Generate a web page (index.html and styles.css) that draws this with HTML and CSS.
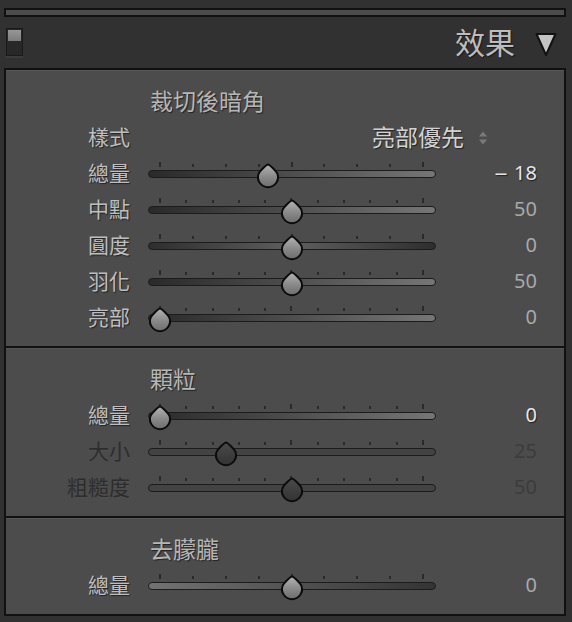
FILE: index.html
```html
<!DOCTYPE html>
<html lang="zh-Hant">
<head>
<meta charset="utf-8">
<title>效果</title>
<link rel="stylesheet" href="styles.css">
</head>
<body>
<svg class="defs" width="0" height="0" aria-hidden="true">
  <defs>
    <linearGradient id="thumbFill" x1="0" y1="0" x2="0" y2="1">
      <stop offset="0" stop-color="#b3b3b3"/>
      <stop offset="0.55" stop-color="#888888"/>
      <stop offset="1" stop-color="#6e6e6e"/>
    </linearGradient>
    <linearGradient id="thumbDim" x1="0" y1="0" x2="0" y2="1">
      <stop offset="0" stop-color="#4a4a4a"/>
      <stop offset="1" stop-color="#333333"/>
    </linearGradient>
    <path id="drop" d="M12 1.5 C13.5 1.5 20 8 21.3 10.5 A10 10 0 1 1 2.7 10.5 C4 8 10.5 1.5 12 1.5 Z"/>
  </defs>
</svg>

<div class="topbar"></div>

<div class="header">
  <div class="toggle"><span class="toggle-on"></span></div>
  <div class="title-group">
    <span class="title">效果</span>
    <svg class="collapse" width="24" height="25" viewBox="0 0 24 25"><polygon points="2.5,2 21.5,2 12,23"/></svg>
  </div>
</div>

<div class="panel">
  <section class="section">
    <div class="heading">裁切後暗角</div>
    <div class="row">
      <span class="label">樣式</span>
      <div class="dropdown">
        <span class="dropdown-text">亮部優先</span>
        <svg class="updown" width="10" height="16" viewBox="0 0 10 16"><polygon points="1,6.5 9,6.5 5,1.5"/><polygon points="1,9.5 9,9.5 5,14.5"/></svg>
      </div>
    </div>
    <div class="row">
      <span class="label">總量</span>
      <div class="slider" style="--v:0.41">
        <div class="ticks"><i class="tick tall"></i><i class="tick"></i><i class="tick"></i><i class="tick"></i><i class="tick tall"></i><i class="tick"></i><i class="tick"></i><i class="tick"></i><i class="tick tall"></i></div>
        <div class="track track-up"></div>
        <svg class="thumb" width="24" height="26" viewBox="0 0 24 26"><use href="#drop"/></svg>
      </div>
      <span class="value bright"><span class="minus">–</span> 18</span>
    </div>
    <div class="row">
      <span class="label">中點</span>
      <div class="slider" style="--v:0.5">
        <div class="ticks"><i class="tick tall"></i><i class="tick"></i><i class="tick"></i><i class="tick"></i><i class="tick"></i><i class="tick tall"></i><i class="tick"></i><i class="tick"></i><i class="tick"></i><i class="tick"></i><i class="tick tall"></i></div>
        <div class="track track-up"></div>
        <svg class="thumb" width="24" height="26" viewBox="0 0 24 26"><use href="#drop"/></svg>
      </div>
      <span class="value">50</span>
    </div>
    <div class="row">
      <span class="label">圓度</span>
      <div class="slider" style="--v:0.5">
        <div class="ticks"><i class="tick tall"></i><i class="tick"></i><i class="tick"></i><i class="tick"></i><i class="tick tall"></i><i class="tick"></i><i class="tick"></i><i class="tick"></i><i class="tick tall"></i></div>
        <div class="track track-mid"></div>
        <svg class="thumb" width="24" height="26" viewBox="0 0 24 26"><use href="#drop"/></svg>
      </div>
      <span class="value">0</span>
    </div>
    <div class="row">
      <span class="label">羽化</span>
      <div class="slider" style="--v:0.5">
        <div class="ticks"><i class="tick tall"></i><i class="tick"></i><i class="tick"></i><i class="tick"></i><i class="tick"></i><i class="tick tall"></i><i class="tick"></i><i class="tick"></i><i class="tick"></i><i class="tick"></i><i class="tick tall"></i></div>
        <div class="track track-up"></div>
        <svg class="thumb" width="24" height="26" viewBox="0 0 24 26"><use href="#drop"/></svg>
      </div>
      <span class="value">50</span>
    </div>
    <div class="row">
      <span class="label">亮部</span>
      <div class="slider" style="--v:0">
        <div class="ticks"><i class="tick tall"></i><i class="tick"></i><i class="tick"></i><i class="tick"></i><i class="tick"></i><i class="tick tall"></i><i class="tick"></i><i class="tick"></i><i class="tick"></i><i class="tick"></i><i class="tick tall"></i></div>
        <div class="track track-up"></div>
        <svg class="thumb" width="24" height="26" viewBox="0 0 24 26"><use href="#drop"/></svg>
      </div>
      <span class="value">0</span>
    </div>
  </section>

  <section class="section">
    <div class="heading">顆粒</div>
    <div class="row">
      <span class="label">總量</span>
      <div class="slider" style="--v:0">
        <div class="ticks"><i class="tick tall"></i><i class="tick"></i><i class="tick"></i><i class="tick"></i><i class="tick"></i><i class="tick tall"></i><i class="tick"></i><i class="tick"></i><i class="tick"></i><i class="tick"></i><i class="tick tall"></i></div>
        <div class="track track-up"></div>
        <svg class="thumb" width="24" height="26" viewBox="0 0 24 26"><use href="#drop"/></svg>
      </div>
      <span class="value bright">0</span>
    </div>
    <div class="row disabled">
      <span class="label">大小</span>
      <div class="slider" style="--v:0.25">
        <div class="ticks"><i class="tick tall"></i><i class="tick"></i><i class="tick"></i><i class="tick"></i><i class="tick"></i><i class="tick tall"></i><i class="tick"></i><i class="tick"></i><i class="tick"></i><i class="tick"></i><i class="tick tall"></i></div>
        <div class="track track-flat"></div>
        <svg class="thumb dim" width="24" height="26" viewBox="0 0 24 26"><use href="#drop"/></svg>
      </div>
      <span class="value">25</span>
    </div>
    <div class="row disabled">
      <span class="label">粗糙度</span>
      <div class="slider" style="--v:0.5">
        <div class="ticks"><i class="tick tall"></i><i class="tick"></i><i class="tick"></i><i class="tick"></i><i class="tick"></i><i class="tick tall"></i><i class="tick"></i><i class="tick"></i><i class="tick"></i><i class="tick"></i><i class="tick tall"></i></div>
        <div class="track track-flat"></div>
        <svg class="thumb dim" width="24" height="26" viewBox="0 0 24 26"><use href="#drop"/></svg>
      </div>
      <span class="value">50</span>
    </div>
  </section>

  <section class="section">
    <div class="heading">去朦朧</div>
    <div class="row">
      <span class="label">總量</span>
      <div class="slider" style="--v:0.5">
        <div class="ticks"><i class="tick tall"></i><i class="tick"></i><i class="tick"></i><i class="tick"></i><i class="tick tall"></i><i class="tick"></i><i class="tick"></i><i class="tick"></i><i class="tick tall"></i></div>
        <div class="track track-down"></div>
        <svg class="thumb" width="24" height="26" viewBox="0 0 24 26"><use href="#drop"/></svg>
      </div>
      <span class="value">0</span>
    </div>
  </section>
</div>
</body>
</html>
```

FILE: styles.css
```css
html, body {
  margin: 0;
  padding: 0;
}

body {
  background: #313131;
  width: 572px;
  height: 622px;
  overflow: hidden;
  font-family: "Noto Sans", "Noto Sans CJK TC", sans-serif;
  color: #b8b8b8;
}

.defs {
  position: absolute;
  width: 0;
  height: 0;
}

.topbar {
  box-sizing: border-box;
  margin: 8px 6px 0 4px;
  height: 9px;
  border: 2px solid #111;
  background: #4c4c4c;
}

.header {
  box-sizing: border-box;
  height: 51px;
  display: flex;
  justify-content: space-between;
  align-items: flex-start;
  padding: 0 14px 0 6px;
}

.toggle {
  box-sizing: border-box;
  margin-top: 11px;
  width: 17px;
  height: 28px;
  border: 1px solid #1a1a1a;
  background: #282828;
  padding: 1px;
  box-shadow: 0 2px 0 #3b3b3b;
}

.toggle-on {
  display: block;
  height: 11px;
  background: linear-gradient(#979797, #7c7c7c);
}

.title-group {
  display: flex;
  align-items: center;
  gap: 19px;
  height: 51px;
}

.title {
  font-size: 30px;
  line-height: 51px;
  color: #bdbdbd;
  text-shadow: 1px 1px 1px rgba(0, 0, 0, 0.5);
}

.collapse {
  display: block;
  margin-top: 3px;
}

.collapse polygon {
  fill: #c3c3c3;
  stroke: #111;
  stroke-width: 2;
  stroke-linejoin: round;
}

.panel {
  margin: 0 6px 0 4px;
  border: 2px solid #111;
  background: #4c4c4c;
}

.section {
  padding: 13px 0 11px;
  box-shadow: inset 0 1px 0 #575757;
}

.section + .section {
  border-top: 2px solid #111;
}

.heading {
  height: 36px;
  line-height: 36px;
  padding-left: 144px;
  font-size: 23px;
  color: #b6b6b6;
  text-shadow: 1px 1px 1px rgba(0, 0, 0, 0.55);
}

.row {
  display: grid;
  grid-template-columns: 124px 288px 83px;
  column-gap: 18px;
  height: 36px;
  align-items: center;
}

.label {
  text-align: right;
  font-size: 21px;
  line-height: 36px;
  color: #bebebe;
  text-shadow: 1px 1px 1px rgba(0, 0, 0, 0.55);
}

.value {
  text-align: right;
  font-size: 20px;
  line-height: 36px;
  color: #a9a9a9;
}

.value.bright {
  color: #e6e6e6;
  text-shadow: 1px 1px 1px rgba(0, 0, 0, 0.6);
}

.minus {
  display: inline-block;
  transform: scaleX(1.3);
  margin-right: 3px;
}

.row.disabled .label {
  color: #2d2d2d;
  text-shadow: 0 1px 0 rgba(255, 255, 255, 0.04);
}

.row.disabled .value {
  color: #3c3c3c;
}

.dropdown {
  grid-column: 2 / 4;
  display: flex;
  justify-content: flex-end;
  align-items: center;
  gap: 14px;
  padding-right: 49px;
}

.dropdown-text {
  font-size: 23px;
  line-height: 36px;
  color: #d2d2d2;
  text-shadow: 1px 1px 1px rgba(0, 0, 0, 0.55);
}

.updown {
  display: block;
  margin-top: 1px;
}

.updown polygon {
  fill: #7a7a7a;
}

.slider {
  position: relative;
  height: 36px;
}

.ticks {
  box-sizing: border-box;
  margin-top: 7px;
  height: 5px;
  padding: 0 12px 0 11px;
  display: flex;
  justify-content: space-between;
  align-items: flex-end;
}

.tick {
  display: block;
  width: 2px;
  height: 3px;
  background: #2a2a2a;
}

.tick.tall {
  height: 5px;
}

.track {
  box-sizing: border-box;
  margin-top: 3px;
  height: 8px;
  border-radius: 4px;
  border: 1.5px solid #1c1c1c;
}

.track-up {
  background: linear-gradient(90deg, #2a2a2a, #4a4a4a 45%, #767676);
}

.track-mid {
  background: linear-gradient(90deg, #2e2e2e, #5e5e5e 50%, #2e2e2e);
}

.track-down {
  background: linear-gradient(90deg, #727272, #4f4f4f 55%, #343434);
}

.track-flat {
  background: #434343;
}

.thumb {
  position: absolute;
  top: 8px;
  left: calc(var(--v) * 263px);
  overflow: visible;
}

.thumb use {
  fill: url(#thumbFill);
  stroke: #0c0c0c;
  stroke-width: 2;
}

.thumb.dim use {
  fill: url(#thumbDim);
}
```
